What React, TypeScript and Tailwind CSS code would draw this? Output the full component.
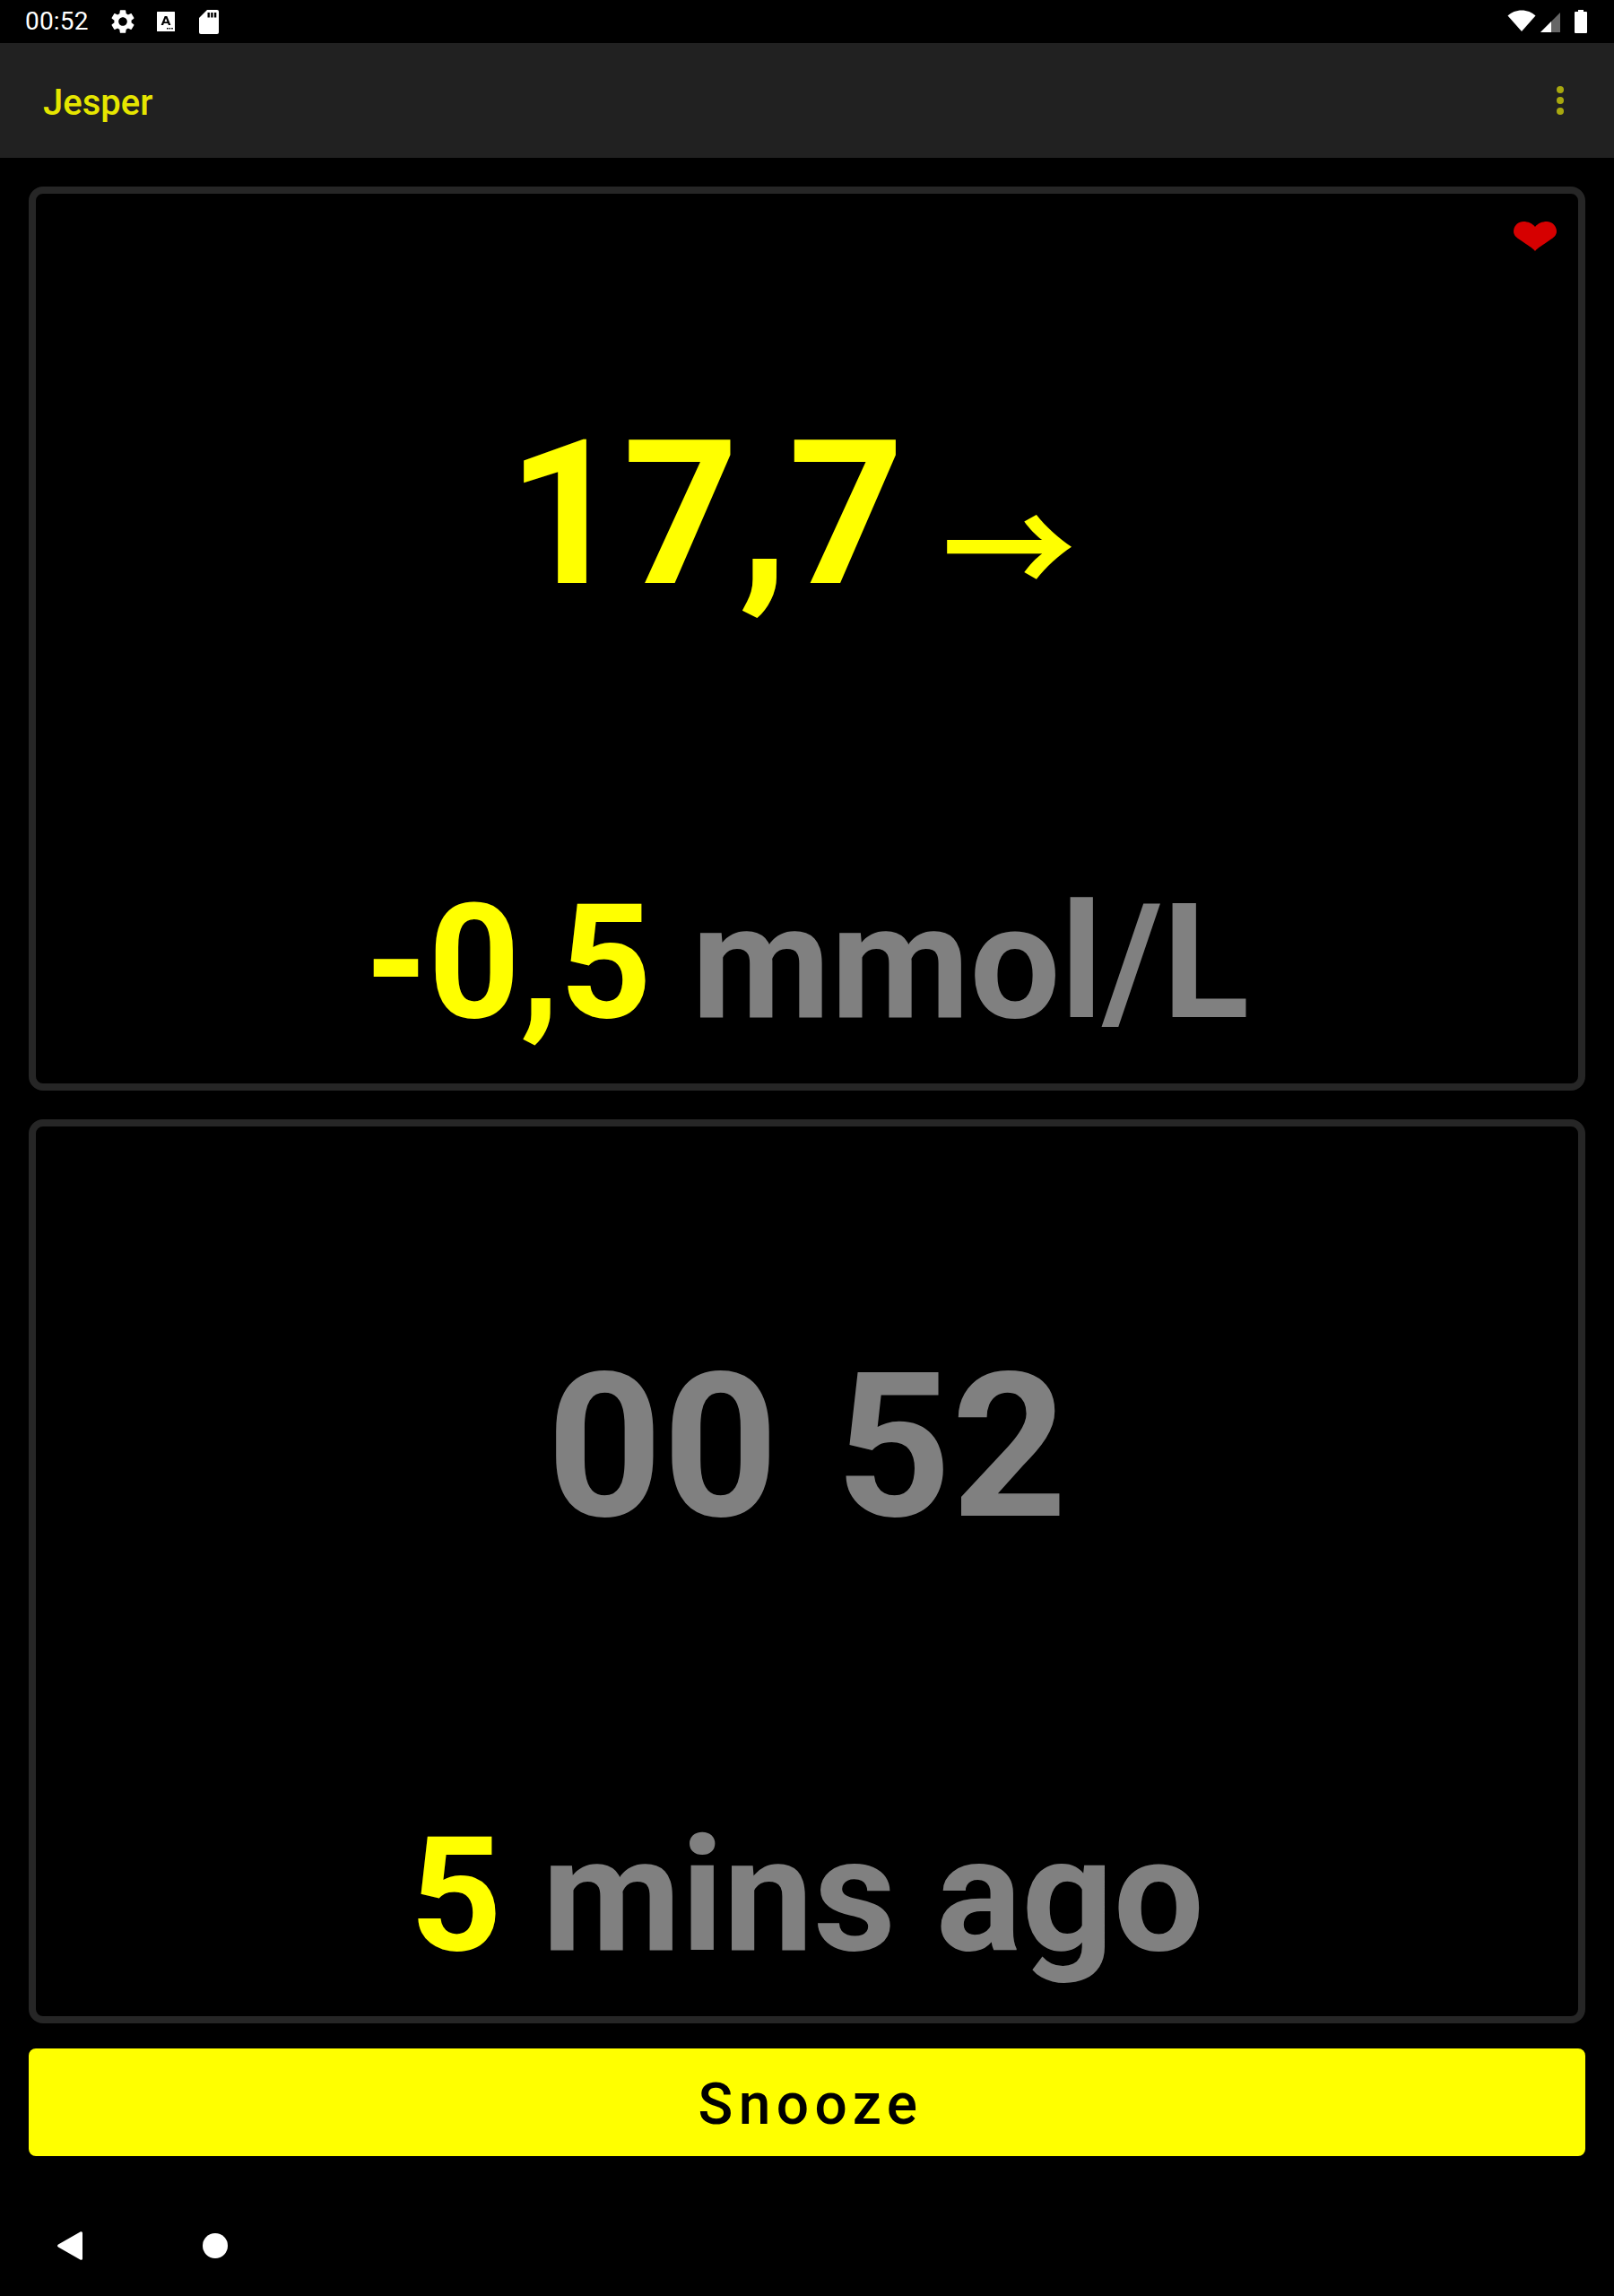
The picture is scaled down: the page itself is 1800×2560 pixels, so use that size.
import type { ReactNode } from 'react';

const roboto = "font-['Roboto',sans-serif]";

function SettingsIcon() {
  return (
    <svg viewBox="0 0 24 24" className="w-[32px] h-[32px] fill-white">
      <path d="M19.14 12.94c.04-.3.06-.61.06-.94 0-.32-.02-.64-.07-.94l2.03-1.58c.18-.14.23-.41.12-.61l-1.92-3.32c-.12-.22-.37-.29-.59-.22l-2.39.96c-.5-.38-1.03-.7-1.62-.94l-.36-2.54c-.04-.24-.24-.41-.48-.41h-3.84c-.24 0-.43.17-.47.41l-.36 2.54c-.59.24-1.13.57-1.62.94l-2.39-.96c-.22-.08-.47 0-.59.22L2.74 8.87c-.12.21-.08.47.12.61l2.03 1.58c-.05.3-.09.63-.09.94s.02.64.07.94l-2.03 1.58c-.18.14-.23.41-.12.61l1.92 3.32c.12.22.37.29.59.22l2.39-.96c.5.38 1.03.7 1.62.94l.36 2.54c.05.24.24.41.48.41h3.84c.24 0 .44-.17.47-.41l.36-2.54c.59-.24 1.13-.56 1.62-.94l2.39.96c.22.08.47 0 .59-.22l1.92-3.32c.12-.22.07-.47-.12-.61l-2.01-1.58zM12 15.6c-1.98 0-3.6-1.62-3.6-3.6s1.62-3.6 3.6-3.6 3.6 1.62 3.6 3.6-1.62 3.6-3.6 3.6z" />
    </svg>
  );
}

function KeyboardAIcon() {
  return (
    <svg viewBox="0 0 20 22" className="w-[20px] h-[22px]">
      <rect width="20" height="22" rx="0.5" fill="#fff" />
      <path d="M4.6 15 8.7 5h2.6l4.1 10h-2.5l-.7-1.9H7.8L7.1 15zM8.5 11.2h3L10 7.3z" fill="#000" />
      <path d="M11 18h1.6v1.6H11zM13.6 18h1.6v1.6h-1.6zM16.2 18h1.6v1.6h-1.6z" fill="#000" />
    </svg>
  );
}

function SdCardIcon() {
  return (
    <svg viewBox="0 0 22 27" className="w-[22px] h-[27px]">
      <path d="M9 0h11a2 2 0 0 1 2 2v23a2 2 0 0 1-2 2H2a2 2 0 0 1-2-2V9z" fill="#fff" />
      <path d="M9.5 3h2.4v5.5H9.500zM13.200 3h2.400v5.500h-2.400zM16.900 3h2.400v5.500h-2.400z" fill="#000" />
    </svg>
  );
}

function StatusRight() {
  return (
    <div className="flex items-start">
      <svg viewBox="0 0 32 24" className="w-[32px] h-[24px] mt-[11px]">
        <path d="M16 24 0.500 6.500C4.500 2.800 10 0.500 16 0.500s11.500 2.300 15.500 6z" fill="#fff" />
      </svg>
      <svg viewBox="0 0 22 22" className="w-[22px] h-[22px] mt-[14px] ml-[5px]">
        <path d="M22 0v22H0z" fill="#666" />
        <path d="M12 10v12H0z" fill="#fff" />
      </svg>
      <svg viewBox="0 0 14 26" className="w-[14px] h-[26px] mt-[11px] ml-[16px] mr-[30px]">
        <path d="M4 0h6v2h3a1 1 0 0 1 1 1v22a1 1 0 0 1-1 1H1a1 1 0 0 1-1-1V3a1 1 0 0 1 1-1h3z" fill="#fff" />
      </svg>
    </div>
  );
}

function Card({ children }: { children: ReactNode }) {
  return (
    <section className="relative h-[1008px] border-[8px] border-[#262626] rounded-[16px] flex flex-col items-center">
      {children}
    </section>
  );
}

export default function App() {
  return (
    <div className={`w-[1800px] h-[2560px] bg-black flex flex-col ${roboto}`}>
      <div className="h-[48px] flex justify-between">
        <div className="flex items-center pl-[28px]">
          <span className="text-[28px] leading-none text-white w-[93px] tracking-[0.2px]">00:52</span>
          <SettingsIcon />
          <span className="ml-[22px]"><KeyboardAIcon /></span>
          <span className="ml-[27px]"><SdCardIcon /></span>
        </div>
        <StatusRight />
      </div>

      <header className="h-[128px] bg-[#212121] flex items-center justify-between pl-[48px] pr-[56px]">
        <span className="text-[40px] leading-none font-medium text-[#e6e600] pt-[6px]">Jesper</span>
        <div className="flex flex-col gap-[4px]">
          <span className="w-[8px] h-[8px] rounded-full bg-[#a8a80f]" />
          <span className="w-[8px] h-[8px] rounded-full bg-[#a8a80f]" />
          <span className="w-[8px] h-[8px] rounded-full bg-[#a8a80f]" />
        </div>
      </header>

      <main className="flex flex-col px-[32px] pt-[32px]">
        <div className="flex flex-col gap-[32px]">
          <Card>
            <svg viewBox="0 0 48 33" className="absolute top-[31px] right-[24px] w-[48px] h-[33px] fill-[#d60000]">
              <path d="M24 33C21 29 15 26 8 21 3 18 0 15 0 11 0 5 5 0 11 0c5 0 10 2 13 6 3-4 8-6 13-6 6 0 11 5 11 11 0 4-3 7-8 10-7 5-13 8-16 12z" />
            </svg>
            <div className="mt-[237px] h-[240px] flex items-center text-[225px] leading-none font-bold text-[#ffff00] -ml-[34px]">
              17,7
              <span className="ml-[42px] mt-[58px] text-[150px] font-['Noto_Sans_CJK_SC',sans-serif]">→</span>
            </div>
            <div className="mt-[291px] text-[179px] leading-none font-bold text-[#808080]">
              <span className="text-[#ffff00]">-0,5</span> mmol/L
            </div>
          </Card>
          <Card>
            <div className="mt-[237px] h-[240px] flex items-center text-[225px] leading-none font-bold text-[#808080]">
              00<span className="ml-[64px]">52</span>
            </div>
            <div className="mt-[291px] text-[179px] leading-none font-bold text-[#808080]">
              <span className="text-[#ffff00]">5</span> mins ago
            </div>
          </Card>
        </div>

        <button className="mt-[28px] h-[120px] bg-[#ffff00] rounded-[8px] text-black text-[64px] leading-none font-medium tracking-[0.1em] pt-[6px] pl-[8px]">
          Snooze
        </button>
      </main>

      <nav className="flex items-center h-[40px] mt-[80px] pl-[64px]">
        <svg viewBox="0 0 28 32" className="w-[28px] h-[32px] fill-white">
          <path d="M1 14.500 25.500.400C26.700-.300 28 .500 28 1.800v28.400c0 1.300-1.300 2.100-2.500 1.400L1 17.500c-1.300-.700-1.300-2.300 0-3z" />
        </svg>
        <span className="ml-[134px] w-[28px] h-[28px] rounded-full bg-white" />
      </nav>
    </div>
  );
}
